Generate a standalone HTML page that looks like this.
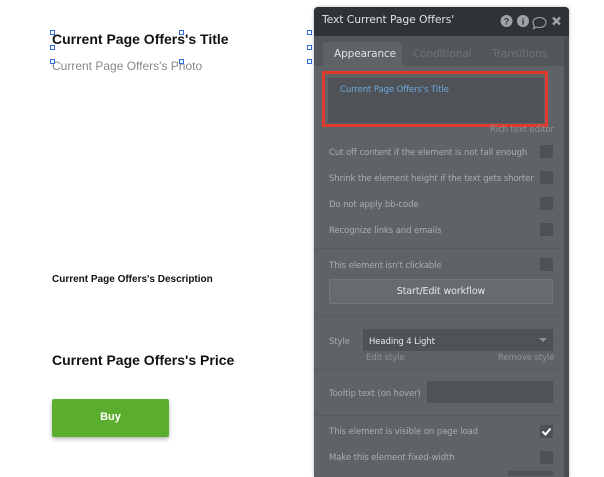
<!DOCTYPE html>
<html><head><style>
*{margin:0;padding:0;box-sizing:border-box}
body{width:604px;height:473px;background:#fff;position:relative;overflow:hidden;font-family:"Liberation Sans",sans-serif}
.a{position:absolute}
.h{position:absolute;width:5px;height:5px;border:1px solid #2a6fe0;background:#fff}
.p{font-family:"DejaVu Sans","Liberation Sans",sans-serif;font-size:8.5px;color:#a9adb1;letter-spacing:-0.1px}
.cb{position:absolute;left:540px;width:13px;height:13px;background:#4d5155}
.sep{position:absolute;left:314px;width:250px;height:1px;background:#575b5f}
</style></head><body>
<div class="a" style="left:52px;top:31px;font-size:14px;font-weight:bold;color:#111">Current Page Offers's Title</div>
<div class="a" style="left:52px;top:59px;font-size:12px;color:#888">Current Page Offers's Photo</div>
<div class="h" style="left:50px;top:30px"></div><div class="h" style="left:179px;top:30px"></div><div class="h" style="left:307px;top:30px"></div>
<div class="h" style="left:50px;top:45px"></div><div class="h" style="left:307px;top:45px"></div>
<div class="h" style="left:50px;top:59px"></div><div class="h" style="left:179px;top:59px"></div><div class="h" style="left:307px;top:59px"></div>
<div class="a" style="left:52px;top:274px;font-size:10px;font-weight:bold;color:#111">Current Page Offers's Description</div>
<div class="a" style="left:52px;top:352px;font-size:14px;font-weight:bold;color:#111">Current Page Offers's Price</div>
<div class="a" style="left:52px;top:399px;width:117px;height:38px;background:#5bad2e;border-radius:2px;box-shadow:0 2px 4px rgba(0,0,0,.3);color:#fff;font-weight:bold;font-size:11px;text-align:center;line-height:37px">Buy</div>

<div class="a" style="left:314px;top:7px;width:255px;height:470px;background:#5f6367;border-radius:4px 4px 0 0;overflow:hidden;box-shadow:0 0 3px rgba(0,0,0,.3)">
 <div class="a" style="left:0;top:0;width:255px;height:29px;background:#2e3335"></div>
 <div class="a" style="left:250px;top:29px;width:5px;height:450px;background:#4a4e52"></div>
 <div class="a" style="left:0;top:29px;width:250px;height:30px;background:#53575b"></div>
 <div class="a" style="left:9px;top:35px;width:79px;height:24px;background:#5f6367;border-radius:3px 3px 0 0"></div>
</div>
<div class="a p" style="left:322px;top:13px;font-size:10.8px;color:#dfe1e2">Text Current Page Offers'</div>
<svg class="a" style="left:497px;top:13px" width="70" height="18" viewBox="0 0 70 18">
 <circle cx="9.5" cy="8" r="6" fill="#9fa3a6"/><text x="9.5" y="11.5" font-size="9" font-weight="bold" text-anchor="middle" fill="#2e3335" font-family="Liberation Sans">?</text>
 <circle cx="26" cy="8" r="6" fill="#9fa3a6"/><text x="26" y="11.5" font-size="9" font-weight="bold" text-anchor="middle" fill="#2e3335" font-family="Liberation Serif">i</text>
 <path d="M36 9.5c0-3 3-5 6.5-5s6.5 2 6.5 5-3 5-6.5 5c-1 0-2 0-3-.5l-3 1.5 1-2.5c-1-1-1.5-2-1.5-3.5z" fill="none" stroke="#9fa3a6" stroke-width="1.1"/>
 <path d="M56 4.5l7 7M63 4.5l-7 7" stroke="#9fa3a6" stroke-width="2.4"/>
</svg>
<div class="a p" style="left:334px;top:48px;font-size:10.5px;color:#dfe1e2">Appearance</div>
<div class="a p" style="left:413px;top:48px;font-size:10.5px;color:#707478">Conditional</div>
<div class="a p" style="left:492px;top:48px;font-size:10.5px;color:#707478">Transitions</div>
<div class="a" style="left:328px;top:78px;width:216px;height:45px;background:#4f5357"></div>
<div class="a" style="left:322px;top:71px;width:226px;height:56px;border:3px solid #e03a2e"></div>
<div class="a p" style="left:340px;top:85px;color:#6fa7e0">Current Page Offers's Title</div>
<div class="a p" style="left:490px;top:125px;color:#8f9397">Rich text editor</div>
<div class="a p" style="left:329px;top:148px">Cut off content if the element is not tall enough</div><div class="cb" style="top:145px"></div>
<div class="a p" style="left:329px;top:174px">Shrink the element height if the text gets shorter</div><div class="cb" style="top:171px"></div>
<div class="a p" style="left:329px;top:200px">Do not apply bb-code</div><div class="cb" style="top:197px"></div>
<div class="a p" style="left:329px;top:226px">Recognize links and emails</div><div class="cb" style="top:223px"></div>
<div class="sep" style="top:248px"></div>
<div class="a p" style="left:329px;top:261px">This element isn't clickable</div><div class="cb" style="top:258px"></div>
<div class="a p" style="left:329px;top:279px;width:224px;height:25px;background:#676b6f;border:1px solid #73777b;border-radius:2px;text-align:center;line-height:23px;font-size:9.5px;color:#e4e6e7">Start/Edit workflow</div>
<div class="sep" style="top:316px"></div>
<div class="a p" style="left:329px;top:337px">Style</div>
<div class="a" style="left:363px;top:329px;width:190px;height:22px;background:#4f5357"></div>
<div class="a p" style="left:369px;top:337px;color:#e4e6e7">Heading 4 Light</div>
<div class="a" style="left:539px;top:338px;width:0;height:0;border-left:4px solid transparent;border-right:4px solid transparent;border-top:4px solid #8e9296"></div>
<div class="a p" style="left:366px;top:353px;color:#8f9397">Edit style</div>
<div class="a p" style="left:498px;top:353px;color:#8f9397">Remove style</div>
<div class="sep" style="top:369px"></div>
<div class="a p" style="left:329px;top:389px">Tooltip text (on hover)</div>
<div class="a" style="left:427px;top:381px;width:126px;height:22px;background:#4f5357"></div>
<div class="sep" style="top:415px"></div>
<div class="a p" style="left:329px;top:427px">This element is visible on page load</div><div class="cb" style="top:425px"></div>
<svg class="a" style="left:541px;top:427px" width="11" height="9"><path d="M1.5 4.5l3 3 5-6" fill="none" stroke="#fff" stroke-width="2"/></svg>
<div class="a p" style="left:329px;top:453px">Make this element fixed-width</div><div class="cb" style="top:451px"></div>
<div class="a" style="left:508px;top:471px;width:45px;height:5px;background:#4f5357"></div>
</body></html>
